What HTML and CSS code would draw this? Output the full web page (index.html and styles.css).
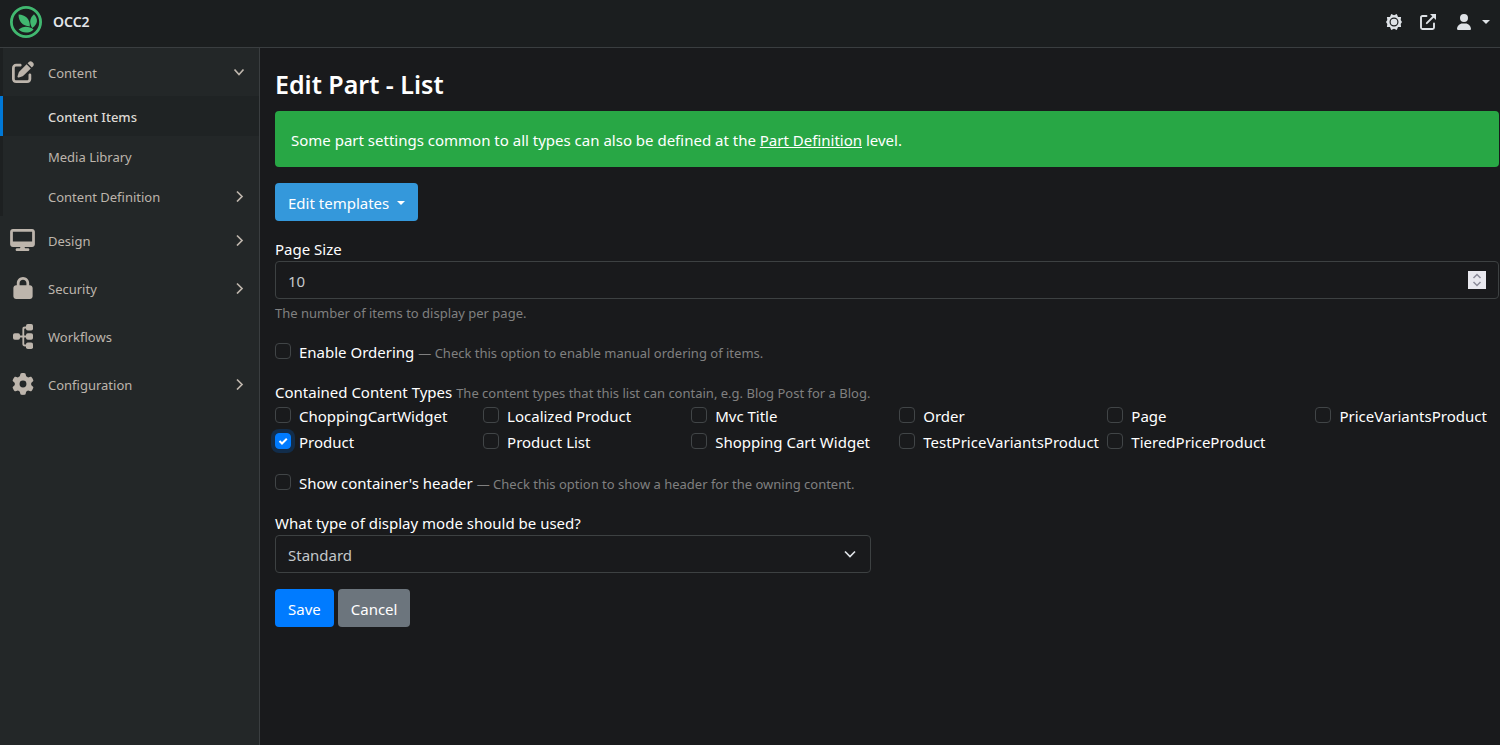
FILE: index.html
```html
<!DOCTYPE html>
<html lang="en">
<head>
<meta charset="utf-8">
<meta name="viewport" content="width=device-width, initial-scale=1">
<title>Edit Part - List</title>
<link rel="stylesheet" href="styles.css">
</head>
<body>
<header class="topbar">
  <a class="brand" href="#">
    <svg class="brand-logo" viewBox="0 0 32 32" aria-hidden="true">
      <circle cx="16" cy="16" r="14.6" fill="none" stroke="#41b870" stroke-width="2.8"/>
      <g fill="#41b870">
        <path d="M8.600 8.400C15.500 8.600 20.200 13 19.800 20.400C12.200 19.800 8.400 15 8.600 8.400Z"/>
        <path d="M24 8.200C28.200 12.600 28.200 17.800 22.200 22C19 16.200 19.800 11.800 24 8.200Z"/>
        <path d="M8.600 23.600C12.600 19.600 19.400 19.800 23.600 23.400C19.400 27.600 12.600 27.600 8.600 23.600Z"/>
      </g>
    </svg>
    <span>OCC2</span>
  </a>
  <div class="tools">
    <button class="tool" type="button" aria-label="Theme">
      <svg width="16" height="16" viewBox="0 0 16 16" aria-hidden="true">
        <path fill="currentColor" d="M5.200 0L8 1.300L10.800 0L12 2.900L15.100 3.100L14.700 6L16 8L14.700 10L15.100 12.900L12 13.100L10.800 16L8 14.700L5.200 16L4 13.100L.9 12.900L1.300 10L0 8L1.300 6L.9 3.100L4 2.900Z"/>
        <circle cx="8" cy="8" r="3.900" fill="none" stroke="#1b1e1f" stroke-width="1.200"/>
      </svg>
    </button>
    <a class="tool" href="#" aria-label="Open site">
      <svg width="16" height="16" viewBox="0 0 16 16" fill="none" stroke="currentColor" stroke-width="1.900" stroke-linecap="round" aria-hidden="true">
        <path d="M6.500 2H2.500Q1 2 1 3.500V13.500Q1 15 2.500 15H12.500Q14 15 14 13.500V9.500"/>
        <path d="M6.800 9.200L13.500 2.500"/>
        <path d="M10 0H16V6Z" fill="currentColor" stroke="none"/>
      </svg>
    </a>
    <button class="tool tool-user" type="button" aria-label="User menu">
      <svg width="14" height="16" viewBox="0 0 448 512" aria-hidden="true"><path fill="currentColor" d="M224 256A128 128 0 1 0 224 0a128 128 0 1 0 0 256zm-45.700 48C79.800 304 0 383.800 0 482.300C0 498.700 13.300 512 29.700 512H418.300c16.400 0 29.700-13.300 29.700-29.700C448 383.800 368.200 304 269.700 304H178.300z"/></svg>
      <span class="caret"></span>
    </button>
  </div>
</header>
<div class="layout">
  <nav class="sidebar" aria-label="Main">
    <a class="nav-item nav-open" href="#">
      <svg class="nav-icon" width="22" height="22" viewBox="0 0 512 512" aria-hidden="true"><path fill="currentColor" d="M471.600 21.700c-21.900-21.900-57.300-21.900-79.200 0L362.300 51.700l97.900 97.900 30.100-30.100c21.900-21.900 21.900-57.300 0-79.200L471.600 21.700zm-299.200 220c-6.100 6.100-10.800 13.600-13.500 21.900l-29.600 88.800c-2.900 8.600-.6 18.100 5.800 24.600s15.900 8.700 24.600 5.800l88.800-29.600c8.200-2.700 15.700-7.400 21.900-13.500L437.700 172.300 339.700 74.300 172.400 241.700zM96 64C43 64 0 107 0 160V416c0 53 43 96 96 96H352c53 0 96-43 96-96V320c0-17.700-14.300-32-32-32s-32 14.300-32 32v96c0 17.700-14.300 32-32 32H96c-17.700 0-32-14.300-32-32V160c0-17.700 14.300-32 32-32h96c17.700 0 32-14.300 32-32s-14.300-32-32-32H96z"/></svg>
      <span class="nav-text">Content</span>
      <svg class="chevron" viewBox="0 0 12 12" aria-hidden="true"><path d="M1.500 3.500L6 8.500L10.500 3.500"/></svg>
    </a>
    <div class="subnav">
      <a class="sub-item active" href="#"><span class="nav-text">Content Items</span></a>
      <a class="sub-item" href="#"><span class="nav-text">Media Library</span></a>
      <a class="sub-item" href="#"><span class="nav-text">Content Definition</span>
        <svg class="chevron" viewBox="0 0 12 12" aria-hidden="true"><path d="M4 1.500L9 6.500L4 11.500"/></svg></a>
    </div>
    <a class="nav-item" href="#">
      <svg class="nav-icon" width="25" height="22" viewBox="0 0 576 512" aria-hidden="true"><path fill="currentColor" d="M64 0C28.700 0 0 28.700 0 64V352c0 35.300 28.700 64 64 64H240l-10.700 32H160c-17.700 0-32 14.300-32 32s14.300 32 32 32H416c17.700 0 32-14.300 32-32s-14.300-32-32-32H346.700L336 416H512c35.300 0 64-28.700 64-64V64c0-35.300-28.700-64-64-64H64zM512 64V288H64V64H512z"/></svg>
      <span class="nav-text">Design</span>
      <svg class="chevron" viewBox="0 0 12 12" aria-hidden="true"><path d="M4 1.500L9 6.500L4 11.500"/></svg>
    </a>
    <a class="nav-item" href="#">
      <svg class="nav-icon" width="20" height="22" viewBox="0 0 448 512" aria-hidden="true"><path fill="currentColor" d="M144 144v48H304V144c0-44.200-35.800-80-80-80s-80 35.800-80 80zM80 192V144C80 64.500 144.500 0 224 0s144 64.500 144 144v48h16c35.300 0 64 28.700 64 64V448c0 35.300-28.700 64-64 64H64c-35.300 0-64-28.700-64-64V256c0-35.300 28.700-64 64-64H80z"/></svg>
      <span class="nav-text">Security</span>
      <svg class="chevron" viewBox="0 0 12 12" aria-hidden="true"><path d="M4 1.500L9 6.500L4 11.500"/></svg>
    </a>
    <a class="nav-item" href="#">
      <svg class="nav-icon" width="20" height="25" viewBox="0 0 20 25" aria-hidden="true">
        <path d="M5 12.500H15M15 3.500H12Q10.300 3.500 10.300 5V20Q10.300 21.500 12 21.500H15" fill="none" stroke="currentColor" stroke-width="1.800"/>
        <g fill="currentColor"><rect y="9.200" width="7" height="6.600" rx="1.800"/><rect x="13" width="7" height="6.600" rx="1.800"/><rect x="13" y="9.200" width="7" height="6.600" rx="1.800"/><rect x="13" y="18.400" width="7" height="6.600" rx="1.800"/></g>
      </svg>
      <span class="nav-text">Workflows</span>
    </a>
    <a class="nav-item" href="#">
      <svg class="nav-icon" width="22" height="22" viewBox="0 0 512 512" aria-hidden="true"><path fill="currentColor" d="M495.900 166.600c3.200 8.700 .5 18.400-6.400 24.600l-43.300 39.400c1.100 8.300 1.700 16.800 1.700 25.400s-.6 17.100-1.700 25.400l43.300 39.400c6.900 6.200 9.600 15.900 6.400 24.600c-4.400 11.900-9.700 23.300-15.800 34.300l-4.700 8.100c-6.600 11-14 21.400-22.100 31.200c-5.900 7.200-15.700 9.600-24.500 6.800l-55.700-17.700c-13.400 10.300-28.200 18.900-44 25.400l-12.500 57.100c-2 9.100-9 16.300-18.200 17.800c-13.800 2.300-28 3.500-42.500 3.500s-28.700-1.200-42.500-3.500c-9.200-1.500-16.200-8.700-18.200-17.800l-12.500-57.100c-15.800-6.500-30.600-15.100-44-25.400L83.100 425.900c-8.800 2.800-18.600 .3-24.500-6.800c-8.100-9.800-15.500-20.200-22.100-31.200l-4.700-8.100c-6.100-11-11.400-22.400-15.800-34.300c-3.200-8.700-.5-18.400 6.400-24.600l43.300-39.400C64.600 273.100 64 264.600 64 256s.6-17.100 1.700-25.400L22.400 191.200c-6.900-6.200-9.600-15.900-6.400-24.600c4.400-11.900 9.700-23.300 15.800-34.300l4.700-8.100c6.600-11 14-21.400 22.100-31.200c5.900-7.200 15.700-9.600 24.500-6.800l55.700 17.700c13.400-10.300 28.200-18.900 44-25.400l12.500-57.100c2-9.100 9-16.300 18.200-17.800C227.300 1.200 241.500 0 256 0s28.700 1.200 42.500 3.500c9.200 1.500 16.200 8.700 18.200 17.800l12.500 57.100c15.800 6.500 30.600 15.100 44 25.400l55.700-17.700c8.800-2.800 18.600-.3 24.500 6.800c8.100 9.800 15.500 20.200 22.100 31.200l4.700 8.100c6.100 11 11.400 22.400 15.800 34.300zM256 336a80 80 0 1 0 0-160 80 80 0 1 0 0 160z"/></svg>
      <span class="nav-text">Configuration</span>
      <svg class="chevron" viewBox="0 0 12 12" aria-hidden="true"><path d="M4 1.500L9 6.500L4 11.500"/></svg>
    </a>
  </nav>
  <main class="content">
    <h1 class="page-title">Edit Part - List</h1>
    <div class="alert">Some part settings common to all types can also be defined at the <a href="#">Part Definition</a> level.</div>
    <button class="btn btn-info" type="button">Edit templates <span class="caret"></span></button>
    <form class="form">
      <div class="group">
        <label class="label" for="page-size">Page Size</label>
        <input class="control" id="page-size" type="number" value="10">
        <div class="hint hint-block">The number of items to display per page.</div>
      </div>
      <div class="group">
        <div class="check"><input type="checkbox" id="ordering"><label for="ordering">Enable Ordering <span class="hint">— Check this option to enable manual ordering of items.</span></label></div>
      </div>
      <div class="group types-group">
        <div class="label">Contained Content Types <span class="hint">The content types that this list can contain, e.g. Blog Post for a Blog.</span></div>
        <div class="types">
          <div class="check"><input type="checkbox" id="t1"><label for="t1">ChoppingCartWidget</label></div>
          <div class="check"><input type="checkbox" id="t2"><label for="t2">Localized Product</label></div>
          <div class="check"><input type="checkbox" id="t3"><label for="t3">Mvc Title</label></div>
          <div class="check"><input type="checkbox" id="t4"><label for="t4">Order</label></div>
          <div class="check"><input type="checkbox" id="t5"><label for="t5">Page</label></div>
          <div class="check"><input type="checkbox" id="t6"><label for="t6">PriceVariantsProduct</label></div>
          <div class="check"><input type="checkbox" id="t7" class="focused" checked><label for="t7">Product</label></div>
          <div class="check"><input type="checkbox" id="t8"><label for="t8">Product List</label></div>
          <div class="check"><input type="checkbox" id="t9"><label for="t9">Shopping Cart Widget</label></div>
          <div class="check"><input type="checkbox" id="t10"><label for="t10">TestPriceVariantsProduct</label></div>
          <div class="check"><input type="checkbox" id="t11"><label for="t11">TieredPriceProduct</label></div>
        </div>
      </div>
      <div class="group">
        <div class="check"><input type="checkbox" id="show-header"><label for="show-header">Show container's header <span class="hint">— Check this option to show a header for the owning content.</span></label></div>
      </div>
      <div class="group">
        <label class="label" for="mode">What type of display mode should be used?</label>
        <select class="control select" id="mode"><option>Standard</option></select>
      </div>
      <div class="actions">
        <button class="btn btn-primary" type="submit">Save</button>
        <button class="btn btn-secondary" type="button">Cancel</button>
      </div>
    </form>
  </main>
</div>
</body>
</html>
```
FILE: styles.css
```css
* { box-sizing: border-box; }

body {
  margin: 0;
  min-height: 100vh;
  display: flex;
  flex-direction: column;
  background: #191a1c;
  color: #fff;
  font: 15px/24px "Segoe UI", "Noto Sans", sans-serif;
}

button, input, select { font: inherit; }

.topbar {
  display: flex;
  align-items: center;
  justify-content: space-between;
  height: 48px;
  padding: 0 10px 4px;
  background: #1b1e1f;
  border-bottom: 1px solid #3a3e40;
}

.brand {
  display: flex;
  align-items: center;
  gap: 11px;
  color: #e3e6ea;
  font-size: 14px;
  font-weight: 600;
  text-decoration: none;
}
.brand-logo { width: 32px; height: 32px; }

.tools { display: flex; align-items: center; gap: 18px; }
.tool {
  display: flex;
  align-items: center;
  padding: 0;
  border: 0;
  background: none;
  color: #dee2e6;
}
.tool-user { gap: 11px; margin-left: 3px; }

.caret {
  display: inline-block;
  border: 4px solid transparent;
  border-top-color: currentColor;
  border-bottom: 0;
}

.layout { display: flex; flex: 1; }

.sidebar {
  flex: 0 0 260px;
  background: #232728;
  border-right: 1px solid #3a3e40;
  font-size: 13px;
}
.nav-item, .sub-item {
  display: grid;
  grid-template-columns: 25px 1fr 12px;
  column-gap: 13px;
  align-items: center;
  height: 48px;
  padding: 0 14px 0 10px;
  color: #bdb5ac;
  text-decoration: none;
}
.nav-open, .subnav { box-shadow: inset 3px 0 #1d2021; }
.nav-icon { justify-self: center; }
.nav-text { grid-column: 2; padding-top: 2px; }
.sub-item { height: 40px; }
.sub-item.active {
  border-left: 3px solid #0078d7;
  padding-left: 7px;
  background: #1f2324;
  color: #dedad5;
  font-weight: 500;
}
.chevron {
  width: 12px;
  height: 12px;
  fill: none;
  stroke: currentColor;
  stroke-width: 1.7;
}

.content { flex: 1; min-width: 0; padding: 16px 1px 16px 15px; }

.page-title {
  margin: 0 0 8px;
  padding-top: 2px;
  font-size: 25px;
  line-height: 37px;
  font-weight: 600;
}

.alert {
  margin-bottom: 16px;
  padding: 17px 16px 15px;
  border-radius: 4px;
  background: #28a745;
}
.alert a { color: inherit; }

.btn {
  height: 38px;
  padding: 2px 13px 0;
  border: 0;
  border-radius: 4px;
  color: #fff;
}
.btn-info { background: #3498db; }
.btn-info .caret { margin: 0 0 4px 4px; }
.btn-primary { background: #007bff; }
.btn-secondary { background: #6c757d; }

.form { margin-top: 16px; }
.group { margin-bottom: 16px; }
.types-group { margin-bottom: 17px; }
.label { display: block; }

.hint { color: #808080; font-size: 13px; line-height: 16px; }
.hint-block { margin-top: 4px; line-height: 21px; }

.control {
  display: block;
  width: 100%;
  height: 38px;
  padding: 2px 12px 0;
  border: 1px solid #3d4142;
  border-radius: 4px;
  background: transparent;
  color: #c4c8cb;
}
.control::-webkit-inner-spin-button {
  appearance: none;
  width: 18px;
  height: 18px;
  opacity: 1;
  background: #e8e8ee url("data:image/svg+xml,%3Csvg xmlns='http://www.w3.org/2000/svg' viewBox='0 0 18 18' fill='none' stroke='%238c8c9a' stroke-width='1.5'%3E%3Cpath d='M5.500 7L9 3.500L12.500 7M5.500 11L9 14.500L12.500 11'/%3E%3C/svg%3E");
}
.select {
  width: 596px;
  max-width: 100%;
  appearance: none;
  background: url("data:image/svg+xml,%3Csvg xmlns='http://www.w3.org/2000/svg' viewBox='0 0 12 12' fill='none' stroke='%23dee2e6' stroke-width='1.700'%3E%3Cpath d='M1 3.500L6 8.500L11 3.500'/%3E%3C/svg%3E") no-repeat right 14px center / 12px;
}

.check { display: flex; gap: 8px; white-space: nowrap; }
.check input {
  flex: none;
  appearance: none;
  width: 16px;
  height: 16px;
  margin: 3px 0 0;
  border: 1px solid #414547;
  border-radius: 4px;
}
.check input:checked {
  border-color: #007bff;
  background: #007bff url("data:image/svg+xml,%3Csvg xmlns='http://www.w3.org/2000/svg' viewBox='0 0 14 14' fill='none' stroke='white' stroke-width='2'%3E%3Cpath d='M3.500 7L6 9.500L10.800 4.800'/%3E%3C/svg%3E");
}
.check .focused { box-shadow: 0 0 0 4px #122d4b; }

.types {
  display: grid;
  grid-template-columns: repeat(5, 17%) 15%;
  row-gap: 2px;
}

.actions { display: flex; gap: 4px; }
```
